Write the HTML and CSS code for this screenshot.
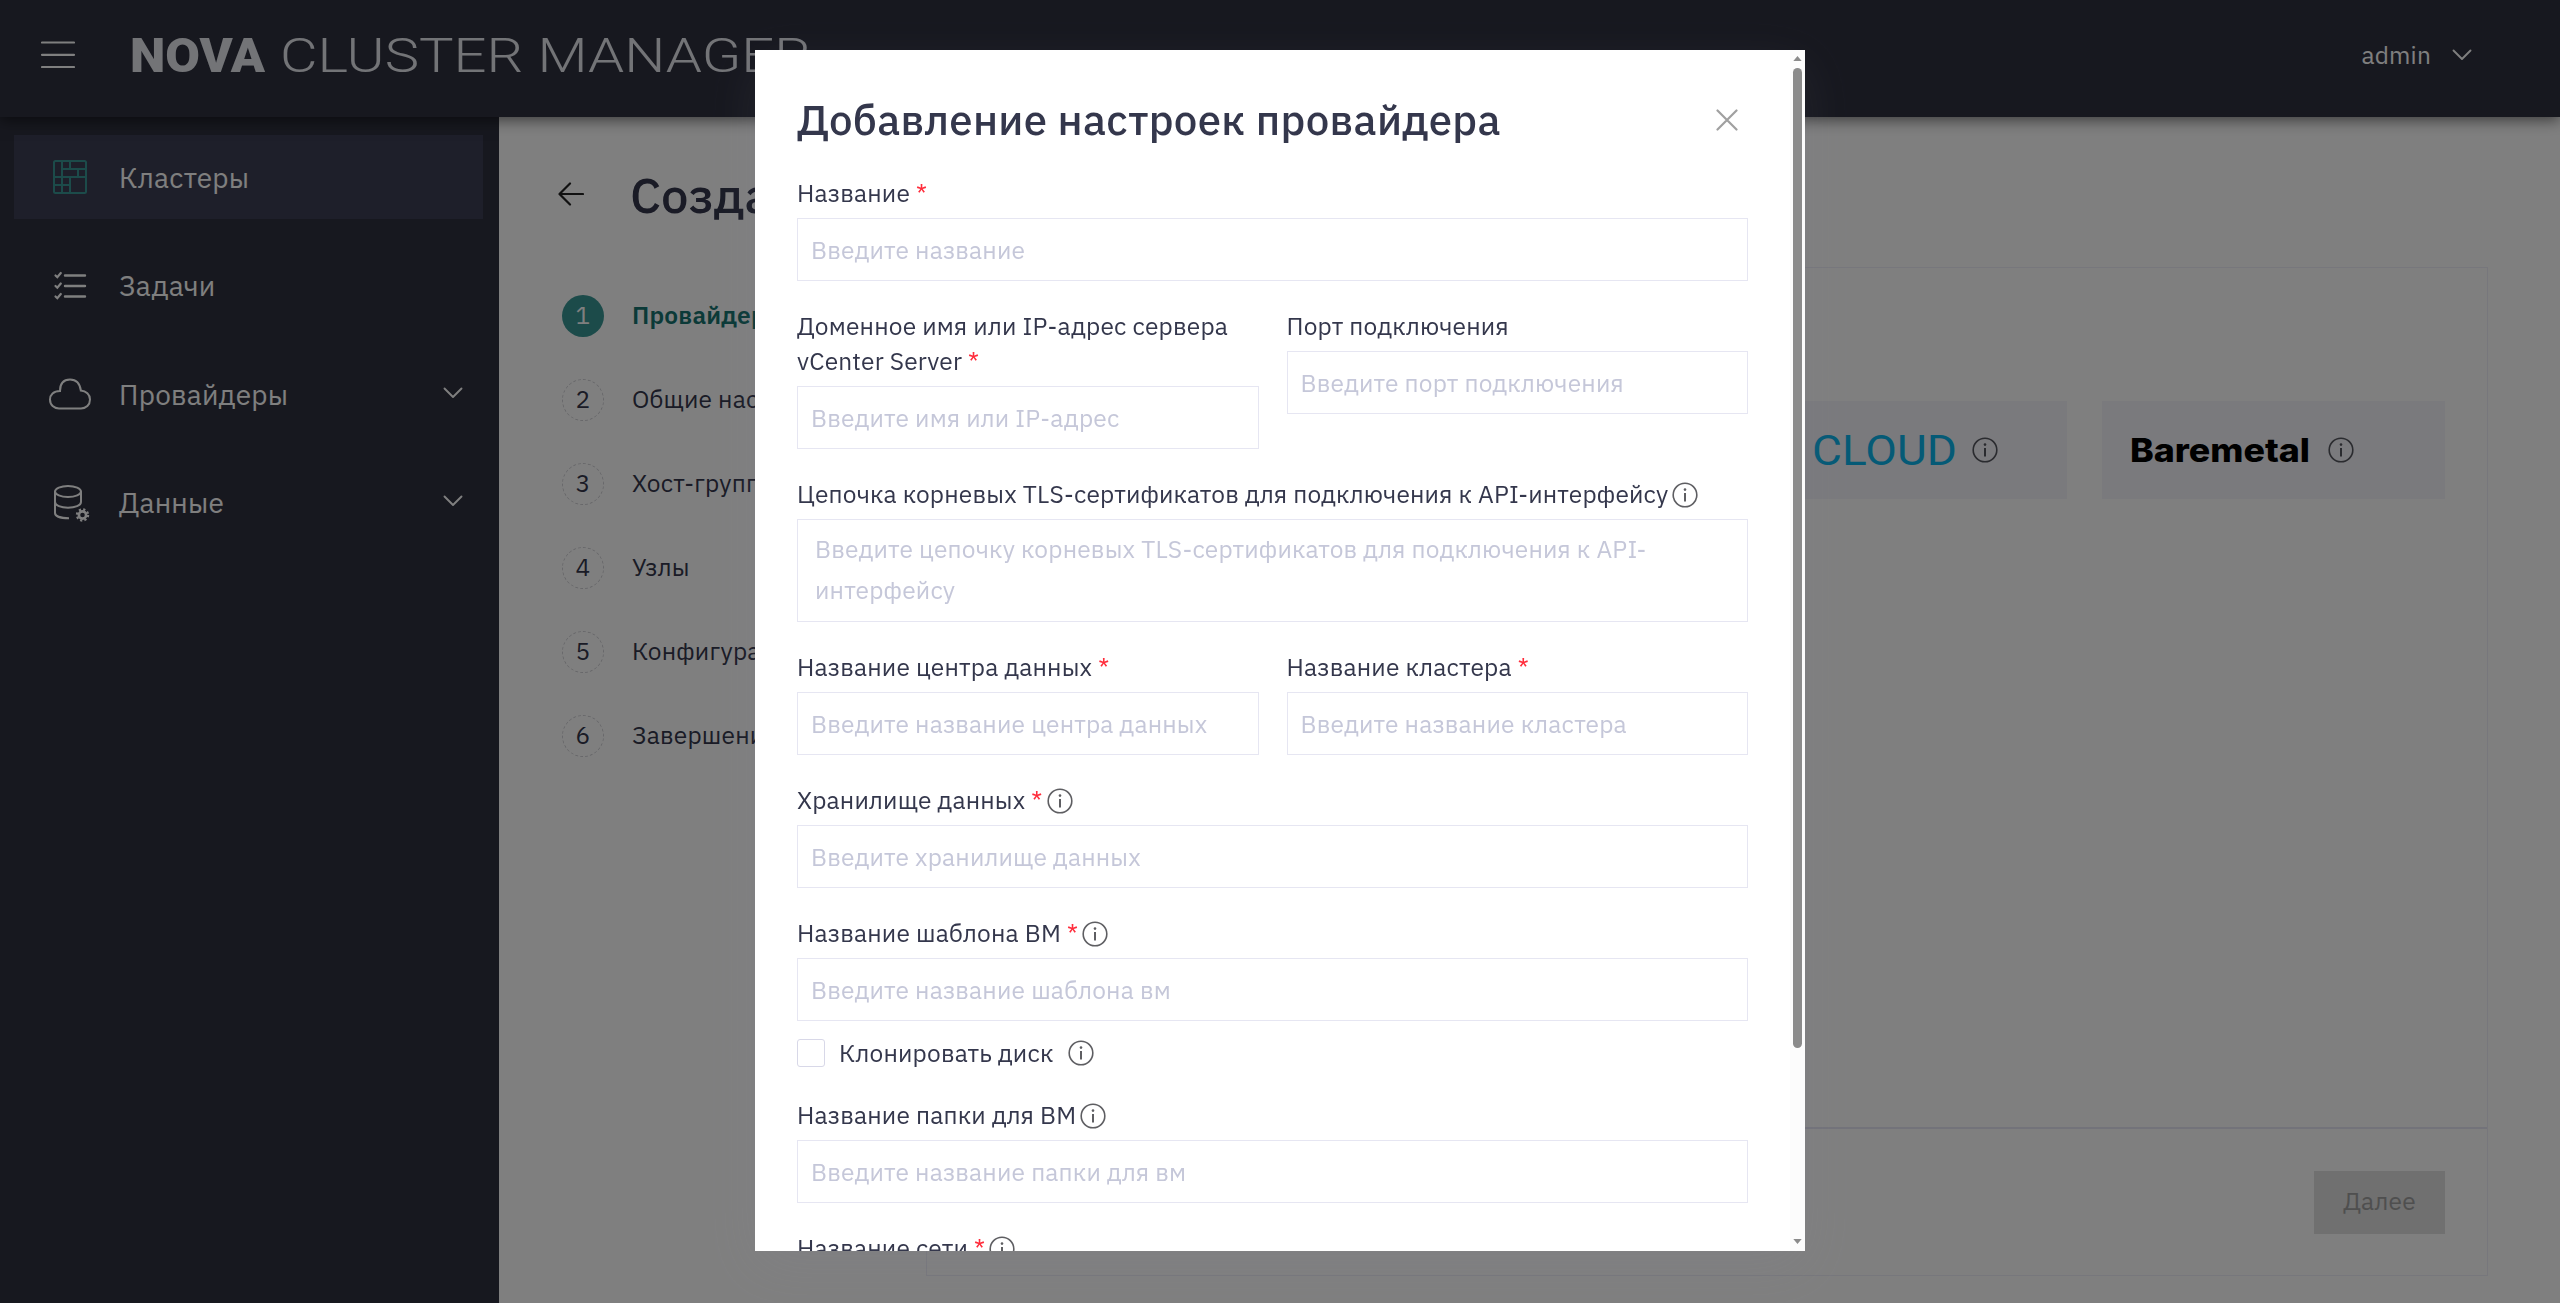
FILE: index.html
```html
<!DOCTYPE html>
<html lang="ru">

<head>
    <meta charset="UTF-8" />
    <meta name="viewport" content="width=device-width" />
    <title>Nova Cluster Manager</title>
    <link rel="stylesheet" href="styles.css">
</head>

<body>
    <!-- shared icons -->
    <svg class="sprite">
        <symbol id="info" viewBox="0 0 26 26">
            <circle cx="13" cy="13" r="11.8" fill="none" stroke="currentColor" stroke-width="1.6" />
            <path d="M13 11v8.500" stroke="currentColor" stroke-width="2" />
            <circle cx="13" cy="7.6" r="1.3" fill="currentColor" />
        </symbol>
        <symbol id="chevron" viewBox="0 0 20 12">
            <path d="M1.500 1.500L10 10l8.500-8.500" fill="none" stroke="currentColor" stroke-width="1.9" stroke-linecap="round" stroke-linejoin="round" />
        </symbol>
    </svg>

    <header class="header">
        <svg class="burger" viewBox="0 0 34 28">
            <path d="M1 1.500h32M1 13.800h32M1 26h32" stroke="currentColor" stroke-width="2.200" stroke-linecap="round" />
        </svg>
        <svg class="logo" viewBox="0 0 680 36">
            <text class="logo_bold" x="-1" y="35" textLength="135" lengthAdjust="spacingAndGlyphs">NOVA</text>
            <text class="logo_light" x="149" y="35" textLength="531" lengthAdjust="spacingAndGlyphs">CLUSTER MANAGER</text>
        </svg>
        <div class="user">
            admin
            <svg class="chevron"><use href="#chevron" /></svg>
        </div>
    </header>

    <div class="layout">
        <nav class="sidebar">
            <a class="nav_item active">
                <svg class="nav_icon" viewBox="0 0 42 42" fill="none" stroke="currentColor" stroke-width="2">
                    <rect x="5" y="5" width="32" height="32" rx="1.500" />
                    <path d="M13 5v32M21 5v8M21 21v16M5 21h32M13 13h24M29 13v8M5 29h16" />
                </svg>
                Кластеры
            </a>
            <a class="nav_item">
                <svg class="nav_icon" viewBox="0 0 42 42" fill="none" stroke="currentColor" stroke-width="2.400" stroke-linecap="round">
                    <path d="M16 10.500h20M16 21h20M16 31.500h20" />
                    <path d="M6.500 10.500l1.800 1.700 3.500-4.200M6.500 21l1.800 1.700 3.500-4.200M6.500 31.500l1.800 1.700 3.500-4.200" stroke-width="2.200" />
                </svg>
                Задачи
            </a>
            <a class="nav_item">
                <svg class="nav_icon" viewBox="0 0 42 42" fill="none" stroke="currentColor" stroke-width="2">
                    <path d="M11 18C11 11 14 6.500 21 6.500s10 4.500 10.800 11c5.200.6 9.200 4 9.200 9 0 5.500-4 9-9 9H10c-5 0-9-3.500-9-9 0-4.500 3.500-8.500 10-8.500z" />
                </svg>
                Провайдеры
                <svg class="chevron"><use href="#chevron" /></svg>
            </a>
            <a class="nav_item">
                <svg class="nav_icon" viewBox="0 0 42 42" fill="none" stroke="currentColor" stroke-width="2">
                    <ellipse cx="19" cy="9.500" rx="13" ry="5.500" />
                    <path d="M6 9.500v21.500c0 3 5 5.300 14 5.300M32 9.500V20c0 3.500-6 5.700-13 5.700S6 23.500 6 20" />
                    <circle cx="33.500" cy="33" r="3.600" stroke-width="2.600" />
                    <circle cx="33.500" cy="33" r="5.600" stroke-width="2.200" stroke-dasharray="2.200 2.200" />
                </svg>
                Данные
                <svg class="chevron"><use href="#chevron" /></svg>
            </a>
        </nav>

        <main class="content">
            <div class="page_head">
                <svg class="back" viewBox="0 0 26 24">
                    <path d="M25 12H2M12 1.500L1.500 12 12 22.500" fill="none" stroke="currentColor" stroke-width="2.200" stroke-linecap="round" stroke-linejoin="round" />
                </svg>
                <h1>Создание кластера</h1>
            </div>
            <div class="wizard">
                <ol class="steps">
                    <li class="current"><span>1</span>Провайдер</li>
                    <li><span>2</span>Общие настройки</li>
                    <li><span>3</span>Хост-группы</li>
                    <li><span>4</span>Узлы</li>
                    <li><span>5</span>Конфигурация</li>
                    <li><span>6</span>Завершение</li>
                </ol>
                <section class="panel">
                    <div class="cards">
                        <div class="card cloud">
                            <svg class="card_logo" viewBox="0 0 142 32">
                                <text x="-2" y="31" textLength="145" lengthAdjust="spacingAndGlyphs">CLOUD</text>
                            </svg>
                            <svg class="info"><use href="#info" /></svg>
                        </div>
                        <div class="card baremetal">
                            <svg class="card_logo" viewBox="0 0 178 24">
                                <text x="-2" y="23.500" textLength="180" lengthAdjust="spacingAndGlyphs">Baremetal</text>
                            </svg>
                            <svg class="info"><use href="#info" /></svg>
                        </div>
                    </div>
                    <div class="panel_footer">
                        <button class="next" disabled>Далее</button>
                    </div>
                </section>
            </div>
        </main>
    </div>

    <div class="overlay">
        <div class="modal">
            <div class="modal_body">
                <div class="modal_head">
                    <h2>Добавление настроек провайдера</h2>
                    <svg class="close" viewBox="0 0 22 22">
                        <path d="M1.500 1.500l19 19M20.500 1.500l-19 19" stroke="currentColor" stroke-width="2.200" stroke-linecap="round" />
                    </svg>
                </div>
                <form class="form">
                    <div class="field">
                        <label>Название <b>*</b></label>
                        <input type="text" placeholder="Введите название">
                    </div>
                    <div class="row">
                        <div class="field">
                            <label>Доменное имя или IP-адрес сервера vCenter Server <b>*</b></label>
                            <input type="text" placeholder="Введите имя или IP-адрес">
                        </div>
                        <div class="field">
                            <label>Порт подключения</label>
                            <input type="text" placeholder="Введите порт подключения">
                        </div>
                    </div>
                    <div class="field">
                        <label>Цепочка корневых TLS-сертификатов для подключения к API-интерфейсу<svg class="info"><use href="#info" /></svg></label>
                        <textarea placeholder="Введите цепочку корневых TLS-сертификатов для подключения к API-интерфейсу"></textarea>
                    </div>
                    <div class="row">
                        <div class="field">
                            <label>Название центра данных <b>*</b></label>
                            <input type="text" placeholder="Введите название центра данных">
                        </div>
                        <div class="field">
                            <label>Название кластера <b>*</b></label>
                            <input type="text" placeholder="Введите название кластера">
                        </div>
                    </div>
                    <div class="field">
                        <label>Хранилище данных <b>*</b><svg class="info"><use href="#info" /></svg></label>
                        <input type="text" placeholder="Введите хранилище данных">
                    </div>
                    <div class="field">
                        <label>Название шаблона ВМ <b>*</b><svg class="info"><use href="#info" /></svg></label>
                        <input type="text" placeholder="Введите название шаблона вм">
                        <div class="check">
                            <span class="box"></span>
                            Клонировать диск
                            <svg class="info"><use href="#info" /></svg>
                        </div>
                    </div>
                    <div class="field">
                        <label>Название папки для ВМ<svg class="info"><use href="#info" /></svg></label>
                        <input type="text" placeholder="Введите название папки для вм">
                    </div>
                    <div class="field">
                        <label>Название сети <b>*</b><svg class="info"><use href="#info" /></svg></label>
                    </div>
                </form>
            </div>
            <div class="scrollbar">
                <svg viewBox="0 0 10 6"><path d="M0 6L5 0l5 6z" fill="currentColor" /></svg>
                <div class="thumb"></div>
                <svg class="down" viewBox="0 0 10 6"><path d="M0 0l5 6 5-6z" fill="currentColor" /></svg>
            </div>
        </div>
    </div>
</body>

</html>
```
FILE: styles.css
```css
* {
    box-sizing: border-box;
}

body {
    margin: 0;
    height: 1303px;
    overflow: hidden;
    display: flex;
    flex-direction: column;
    font-family: "IBM Plex Sans", "Noto Sans", sans-serif;
    font-size: 24.5px;
    letter-spacing: 0.18px;
    color: #34374c;
    background: #fff;
}

svg {
    flex-shrink: 0;
}

.sprite {
    display: none;
}

/* === header === */

.header {
    position: relative;
    z-index: 1;
    flex: none;
    height: 117px;
    padding: 0 88px 7px 41px;
    display: flex;
    align-items: center;
    background: #2e303e;
    color: #fff;
    box-shadow: 0 3px 14px rgba(0, 0, 0, 0.55);
}

.burger {
    width: 34px;
    height: 28px;
}

.logo {
    width: 680px;
    height: 36px;
    margin-left: 56px;
    overflow: visible;
    fill: #e6e8ee;
    letter-spacing: 0;
}

.logo_bold {
    font: 900 49px Roboto, sans-serif;
}

.logo_light {
    font: 300 49px Roboto, sans-serif;
}

.user {
    margin-left: auto;
    display: flex;
    align-items: center;
    gap: 21px;
}

.chevron {
    width: 20px;
    height: 12px;
}

/* === sidebar === */

.layout {
    flex: 1;
    display: flex;
}

.sidebar {
    width: 499px;
    padding: 18px 16px 0 14px;
    display: flex;
    flex-direction: column;
    gap: 24.5px;
    background: #2e303e;
}

.nav_item {
    height: 84px;
    padding: 0 20px 0 35px;
    display: flex;
    align-items: center;
    gap: 28px;
    font-size: 28px;
    letter-spacing: 0.25px;
    color: #fff;
}

.nav_item.active {
    background: #3c3e54;
}

.nav_item .chevron {
    margin: -3px 0 0 auto;
}

.nav_icon {
    width: 42px;
    height: 42px;
}

.active .nav_icon {
    color: #389694;
}

/* === page === */

.content {
    flex: 1;
    padding: 42px 72px 27px 59px;
    display: flex;
    flex-direction: column;
}

.page_head {
    height: 70px;
    display: flex;
    align-items: center;
    gap: 46px;
}

.page_head h1 {
    margin: 0;
    font-size: 49px;
    font-weight: 500;
}

.back {
    width: 26px;
    height: 24px;
    color: #222;
}

.wizard {
    flex: 1;
    margin-top: 38px;
    display: flex;
}

.steps {
    width: 368px;
    margin: 28px 0 0;
    padding: 0 0 0 4px;
    list-style: none;
}

.steps li {
    height: 42px;
    margin-bottom: 42px;
    display: flex;
    gap: 28px;
    line-height: 40px;
    white-space: nowrap;
}

.steps span {
    width: 42px;
    height: 42px;
    border: 1px dashed #cfcfd4;
    border-radius: 50%;
    line-height: 38px;
    text-align: center;
}

.steps .current {
    color: #167470;
    font-weight: 600;
}

.steps .current span {
    border: none;
    line-height: 40px;
    background: #389694;
    color: #fff;
    font-weight: 400;
}

.panel {
    flex: 1;
    display: flex;
    flex-direction: column;
    border: 1px solid #efeff8;
}

.cards {
    flex: 1;
    padding: 133px 42px 0;
    display: flex;
    justify-content: flex-end;
    align-items: flex-start;
    gap: 35px;
}

.card {
    width: 343px;
    height: 98px;
    display: flex;
    align-items: center;
    background: #f4f4fa;
}

.card .info {
    color: #55565e;
}

.card_logo {
    overflow: visible;
    letter-spacing: 0;
}

.cloud .card_logo {
    width: 142px;
    height: 32px;
    margin: 0 16px 0 90px;
    font: 400 43px Roboto, sans-serif;
    fill: #0ab4ec;
}

.baremetal .card_logo {
    width: 178px;
    height: 24px;
    margin: 0 18px 0 30px;
    font: 800 32px Inter, sans-serif;
    fill: #000;
}

.panel_footer {
    height: 148px;
    padding: 0 42px;
    display: flex;
    align-items: center;
    justify-content: flex-end;
    border-top: 2px solid #e6e6f4;
}

.next {
    width: 131px;
    height: 63px;
    padding: 0 0 2px;
    border: none;
    background: #e0e0e0;
    color: #9e9e9e;
    font: inherit;
    letter-spacing: inherit;
}

/* === modal === */

.overlay {
    position: fixed;
    inset: 0;
    z-index: 10;
    padding: 50px 0 52px;
    display: flex;
    justify-content: center;
    background: rgba(0, 0, 0, 0.5);
}

.modal {
    width: 1050px;
    display: flex;
    overflow: hidden;
    background: #fff;
    box-shadow: 0 14px 50px rgba(130, 130, 160, 0.12);
}

.modal_body {
    flex: 1;
    padding: 42px 42px 0;
}

.modal_head {
    height: 56px;
    display: flex;
    align-items: center;
    justify-content: space-between;
}

.modal_head h2 {
    margin: 0;
    font-size: 42px;
    font-weight: 500;
    line-height: 56px;
    letter-spacing: 0.3px;
}

.close {
    width: 22px;
    height: 22px;
    margin: 0 10px 1px 0;
    color: #a0a0a0;
}

.form {
    margin-top: 28px;
    display: flex;
    flex-direction: column;
    gap: 28px;
}

.row {
    display: grid;
    grid-template-columns: 1fr 1fr;
    align-items: start;
    gap: 28px;
}

.field label {
    display: block;
    margin-bottom: 7px;
    line-height: 35px;
}

.field b {
    color: #ff2d3c;
    font-weight: 400;
}

.info {
    width: 26px;
    height: 26px;
    color: #5e5e62;
}

label .info {
    margin-left: 4px;
    vertical-align: -5px;
}

.field input,
.field textarea {
    display: block;
    width: 100%;
    height: 63px;
    padding: 0 13px;
    border: 1px solid #e6e6f2;
    border-radius: 0;
    outline: none;
    background: #fff;
    font: inherit;
    letter-spacing: inherit;
}

.field textarea {
    height: 103px;
    padding: 9px 17px;
    line-height: 41px;
    resize: none;
    overflow: hidden;
}

.field ::placeholder {
    color: #c5c7d9;
    opacity: 1;
}

.check {
    height: 28px;
    margin: 18px 0 3px;
    display: flex;
    align-items: center;
    gap: 14px;
}

.box {
    width: 28px;
    height: 28px;
    border: 1px solid #d8d8e8;
    border-radius: 3px;
}

/* scroll */

.scrollbar {
    width: 15px;
    padding: 6px 3px 7px;
    display: flex;
    flex-direction: column;
    background: #fcfcfc;
    color: #8b8b8b;
}

.scrollbar svg {
    width: 9px;
    height: 5px;
}

.scrollbar .down {
    margin-top: auto;
}

.thumb {
    height: 980px;
    margin-top: 7px;
    border-radius: 5px;
    background: #8b8b8b;
}
```
